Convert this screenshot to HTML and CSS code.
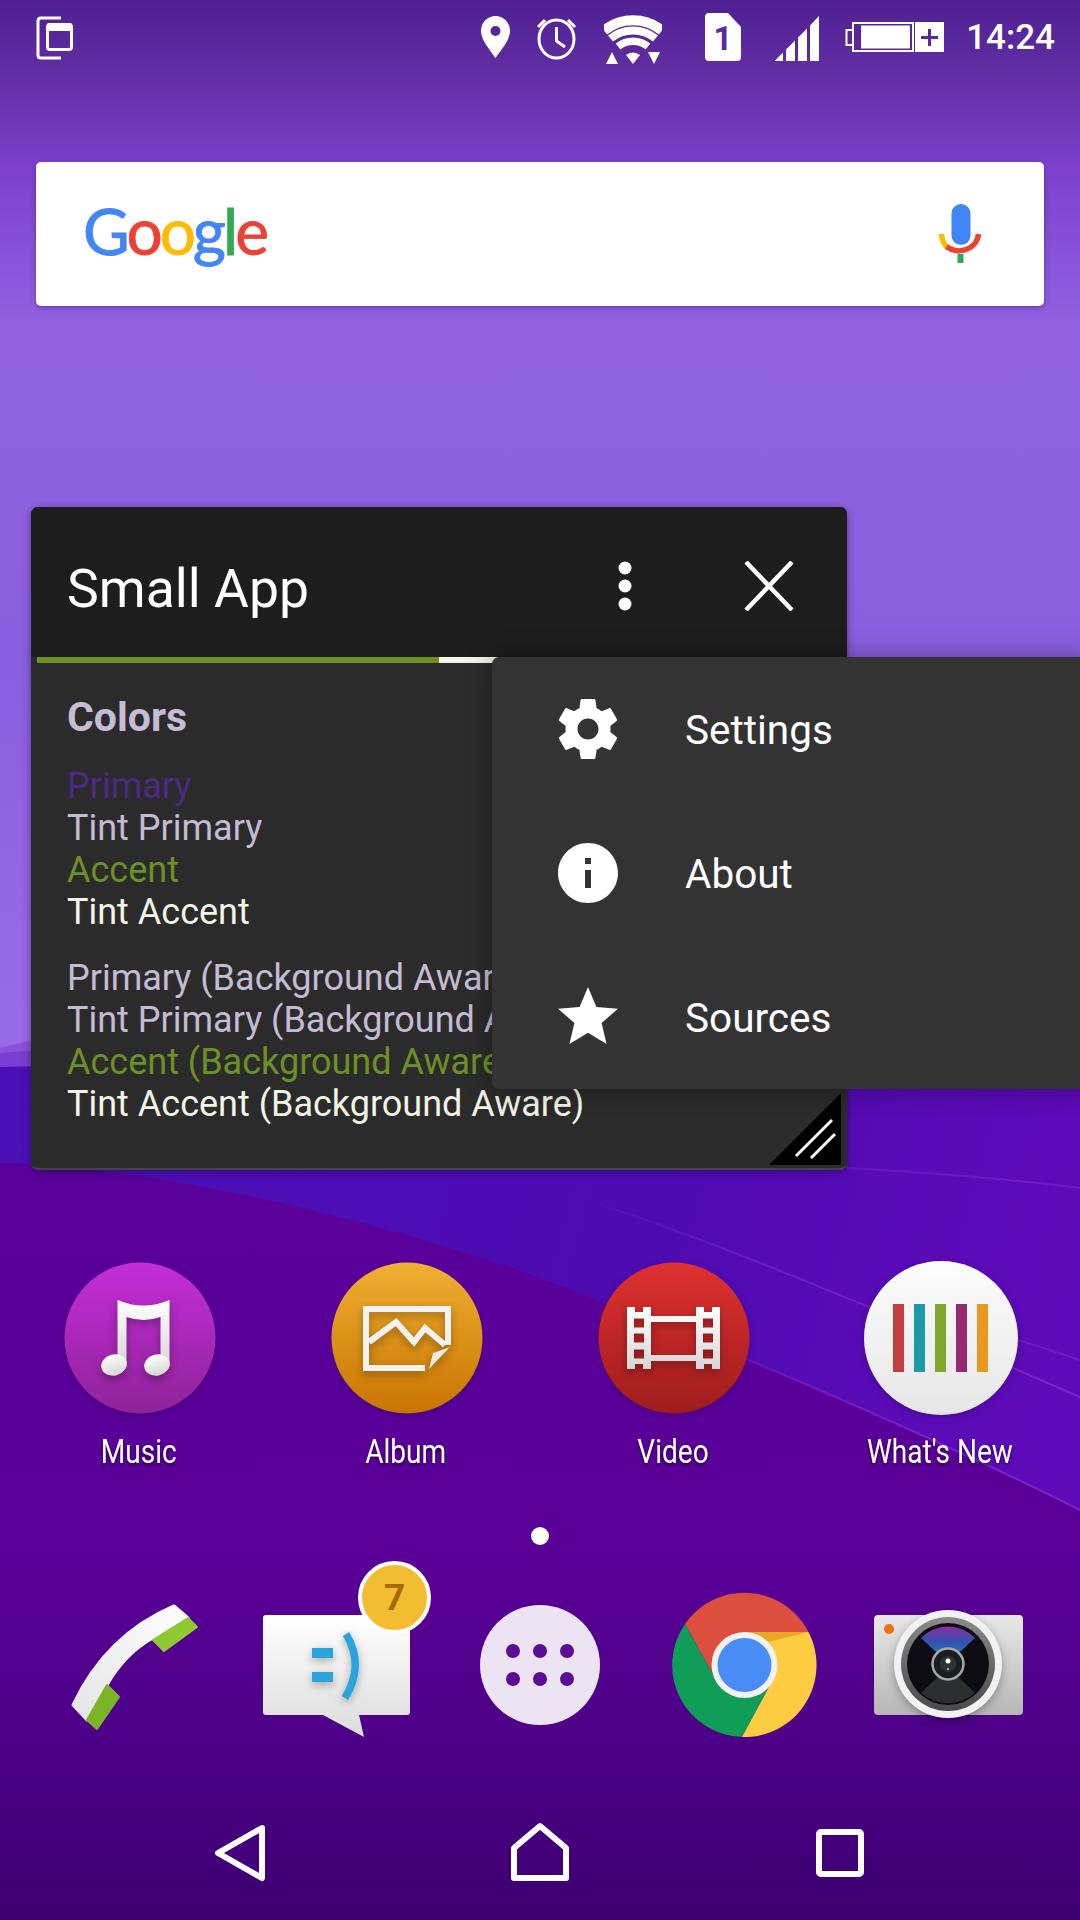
FILE: index.html
```html
<!DOCTYPE html>
<html lang="en">
<head>
<meta charset="utf-8">
<title>Small App</title>
<link rel="stylesheet" href="styles.css">
</head>
<body>
<div class="screen">
  <svg class="wallpaper" viewBox="0 0 1080 1920" aria-hidden="true">
    <defs>
      <linearGradient id="wpTop" x1="0" y1="0" x2="0" y2="1">
        <stop offset="0" stop-color="#4f2092"/>
        <stop offset=".08" stop-color="#6530a8"/>
        <stop offset=".15" stop-color="#7c40cc"/>
        <stop offset=".3" stop-color="#9163e2"/>
        <stop offset=".6" stop-color="#8b5fdf"/>
        <stop offset="1" stop-color="#9a6cec"/>
      </linearGradient>
      <linearGradient id="wpBlue" gradientUnits="userSpaceOnUse" x1="0" y1="1060" x2="1080" y2="1350">
        <stop offset="0" stop-color="#4a10b6"/>
        <stop offset=".6" stop-color="#4e0bb2"/>
        <stop offset="1" stop-color="#5f0ab8"/>
      </linearGradient>
      <linearGradient id="wpLow" gradientUnits="userSpaceOnUse" x1="0" y1="1160" x2="0" y2="1920">
        <stop offset="0" stop-color="#5a009b"/>
        <stop offset=".5" stop-color="#5a0099"/>
        <stop offset=".78" stop-color="#4c0086"/>
        <stop offset="1" stop-color="#3c0070"/>
      </linearGradient>
      <linearGradient id="wpLine" gradientUnits="userSpaceOnUse" x1="560" y1="0" x2="1080" y2="0">
        <stop offset="0" stop-color="#8a2ed0" stop-opacity="0"/>
        <stop offset=".4" stop-color="#8a2ed0" stop-opacity=".45"/>
        <stop offset="1" stop-color="#8a2ed0" stop-opacity=".7"/>
      </linearGradient>
    </defs>
    <rect width="1080" height="1100" fill="url(#wpTop)"/>
    <path d="M0 1048 L40 1038 L1080 1000 V1300 H0Z" fill="#8a52da"/>
    <path d="M0 1053 L40 1050 L1080 1030 V1300 H0Z" fill="#7a3fd0"/>
    <path d="M0 1067 L40 1066 L1080 1050 V1600 H0Z" fill="url(#wpBlue)"/>
    <path d="M0 1163C100 1165 250 1190 424 1240S850 1400 1080 1510V1920H0Z" fill="url(#wpLow)"/>
    <path d="M520 1272C640 1312 900 1420 1080 1510" class="wave-line"/>
    <path d="M600 1205C700 1235 880 1310 1080 1397" class="wave-line"/>
    <path d="M1000 1335C1030 1343 1055 1352 1080 1360" class="wave-line wave-faint"/>
    <path d="M847 1168C920 1172 1000 1178 1080 1188" class="wave-line wave-faint"/>
  </svg>

  <header class="status">
    <svg class="st-tab" viewBox="36 0 38 76" aria-hidden="true">
      <path d="M61 18H41q-3 0-3 3V55q0 3 3 3H61" class="st-line"/>
      <rect x="47.5" y="24.5" width="24" height="25" rx="2.5" class="st-line"/>
      <path d="M47 25q0-2 2-2H70q2 0 2 2v6H47Z" class="st-fill"/>
    </svg>
    <div class="st-right">
      <svg class="st-pin" viewBox="481 0 29 76" aria-hidden="true">
        <path fill-rule="evenodd" class="st-fill" d="M495.5 16c8 0 14.500 6.500 14.500 15 0 9-9 19-14.500 27-5.500-8-14.500-18-14.500-27 0-8.500 6.500-15 14.500-15Zm0 10a5 5 0 1 0 0 10 5 5 0 0 0 0-10Z"/>
      </svg>
      <svg class="st-alarm" viewBox="536 0 43 76" aria-hidden="true">
        <ellipse cx="557.500" cy="39" rx="17.500" ry="19" class="st-line"/>
        <path d="M557.500 27V41L566 47M539 27l7-7M576 27l-7-7" class="st-line"/>
      </svg>
      <svg class="st-wifi" viewBox="605 0 58 76" aria-hidden="true">
        <path d="M605 30.500A46 46 0 0 1 663 30.500" class="st-arc st-a1"/>
        <path d="M611.500 38.500A36 36 0 0 1 656.500 38.500" class="st-arc st-a2"/>
        <path d="M619 46.500A24 24 0 0 1 649 46.500" class="st-arc st-a3"/>
        <path d="M627 55A11 11 0 0 1 641 55L634 64Z" class="st-fill"/>
        <path d="M607 64L613 52L619 64ZM649 52H661L655 64Z" class="st-fill"/>
      </svg>
      <svg class="st-sim" viewBox="706 0 36 76" aria-hidden="true">
        <path d="M710 13H729L742 27V57q0 4-4 4H710q-4 0-4-4V17q0-4 4-4Z" class="st-fill"/>
        <text x="724" y="50" class="st-simnum">1</text>
      </svg>
      <svg class="st-signal" viewBox="775 0 45 76" aria-hidden="true">
        <path d="M775.500 61L784 52.500V61ZM787 49.500L796 40.500V61H787ZM799 37.500L808 28.500V61H799ZM811 25.500L820 16V61H811Z" class="st-fill"/>
      </svg>
      <svg class="st-batt" viewBox="846 0 99 76" aria-hidden="true">
        <path d="M853.500 30H847.500V45H853.500M854 23H914V51H854Z" class="st-thin"/>
        <rect x="862" y="25.500" width="49" height="23" class="st-fill"/>
        <path fill-rule="evenodd" class="st-fill" d="M916 22H945V52H916ZM929 29V36H922V39H929V46H932V39H939V36H932V29Z"/>
      </svg>
      <span class="clock">14:24</span>
    </div>
  </header>

  <section class="search">
    <div class="google"><span class="g-blue">G</span><span class="g-red">o</span><span class="g-yellow">o</span><span class="g-blue">g</span><span class="g-green">l</span><span class="g-red">e</span></div>
    <svg class="mic" viewBox="936 200 48 68" aria-hidden="true">
      <rect x="951.500" y="204" width="19" height="41" rx="9.500" fill="#4285f4"/>
      <path d="M941.500 234a19.500 19.500 0 0 0 7 14.500" fill="none" stroke="#fbbc05" stroke-width="5.500"/>
      <path d="M946.500 246.500a19.500 18 0 0 0 32-12.500" fill="none" stroke="#ea4335" stroke-width="5.500"/>
      <rect x="957.500" y="254" width="6" height="9" fill="#34a853"/>
    </svg>
  </section>

  <section class="window">
    <div class="win-title">
      <h1 class="win-name">Small App</h1>
      <svg class="win-dots" viewBox="0 0 14 50" aria-hidden="true">
        <circle cx="7" cy="7" r="6.500"/><circle cx="7" cy="25" r="6.500"/><circle cx="7" cy="43" r="6.500"/>
      </svg>
      <svg class="win-close" viewBox="0 0 50 50" aria-hidden="true">
        <path d="M2 1L48 49M48 1L2 49"/>
      </svg>
    </div>
    <div class="win-progress"><div class="win-progress-on"></div></div>
    <div class="win-body">
      <h2 class="colors-title">Colors</h2>
      <ul class="colors">
        <li class="c-primary">Primary</li>
        <li class="c-tint">Tint Primary</li>
        <li class="c-accent">Accent</li>
        <li class="c-tintaccent">Tint Accent</li>
      </ul>
      <ul class="colors colors-aware">
        <li class="c-tint">Primary (Background Aware)</li>
        <li class="c-tint">Tint Primary (Background Aware)</li>
        <li class="c-accent">Accent (Background Aware)</li>
        <li class="c-tintaccent">Tint Accent (Background Aware)</li>
      </ul>
    </div>
    <svg class="resizer" viewBox="0 0 72 72" aria-hidden="true">
      <path d="M72 0V70q0 2-2 2H0Z" fill="#000"/>
      <path d="M27 63L63 27M42 65L66 41" class="resizer-line"/>
    </svg>
    <nav class="menu">
      <div class="menu-item">
        <svg class="menu-icon" viewBox="0 0 24 24" aria-hidden="true"><path d="M19.430 12.980c.04-.32.07-.64.07-.98s-.03-.66-.07-.98l2.110-1.650c.19-.15.24-.42.12-.64l-2-3.460c-.12-.22-.39-.3-.61-.22l-2.490 1c-.52-.4-1.080-.73-1.690-.98l-.38-2.650C14.460 2.180 14.250 2 14 2h-4c-.25 0-.46.18-.49.42l-.38 2.650c-.61.25-1.170.59-1.690.98l-2.490-1c-.23-.09-.49 0-.61.22l-2 3.460c-.13.22-.07.49.12.64l2.110 1.650c-.04.32-.07.65-.07.98s.03.66.07.98l-2.110 1.650c-.19.15-.24.42-.12.64l2 3.460c.12.22.39.3.61.22l2.490-1c.52.4 1.080.73 1.690.98l.38 2.650c.03.24.24.42.49.42h4c.25 0 .46-.18.49-.42l.38-2.650c.61-.25 1.170-.59 1.690-.98l2.490 1c.23.09.49 0 .61-.22l2-3.460c.12-.22.07-.49-.12-.64l-2.110-1.650zM12 15.500c-1.930 0-3.500-1.570-3.500-3.500s1.570-3.500 3.500-3.500 3.500 1.570 3.500 3.500-1.570 3.500-3.500 3.500z"/></svg>
        <span class="menu-text">Settings</span>
      </div>
      <div class="menu-item">
        <svg class="menu-icon" viewBox="0 0 24 24" aria-hidden="true"><path d="M12 2C6.480 2 2 6.480 2 12s4.480 10 10 10 10-4.480 10-10S17.520 2 12 2zm1 15h-2v-6h2v6zm0-8h-2V7h2v2z"/></svg>
        <span class="menu-text">About</span>
      </div>
      <div class="menu-item">
        <svg class="menu-icon" viewBox="0 0 24 24" aria-hidden="true"><path d="M12 17.270L18.180 21l-1.640-7.030L22 9.240l-7.190-.61L12 2 9.190 8.630 2 9.240l5.460 4.730L5.820 21z"/></svg>
        <span class="menu-text">Sources</span>
      </div>
    </nav>
  </section>

  <section class="home-row">
    <div class="app">
      <svg class="app-icon" viewBox="0 0 154 154" aria-hidden="true">
        <defs><linearGradient id="gMusic" x1="0" y1="0" x2="0" y2="1"><stop offset="0" stop-color="#c42dd8"/><stop offset="1" stop-color="#8e2398"/></linearGradient>
        <linearGradient id="gGlyph" x1="0" y1="0" x2="0" y2="1"><stop offset="0" stop-color="#ffffff"/><stop offset="1" stop-color="#d6d6d6"/></linearGradient></defs>
        <circle cx="77" cy="77" r="75.500" fill="url(#gMusic)"/>
        <g class="glyph-shadow" fill="url(#gGlyph)">
          <path d="M54.500 39Q80.500 50 106.500 39V104H97.500V56Q80.500 62 63.500 56V104H54.500Z"/>
          <ellipse cx="51" cy="104" rx="13" ry="10.500" transform="rotate(-15 51 104)"/>
          <ellipse cx="94" cy="104" rx="13" ry="10.500" transform="rotate(-15 94 104)"/>
        </g>
      </svg>
      <span class="app-label">Music</span>
    </div>
    <div class="app">
      <svg class="app-icon" viewBox="0 0 154 154" aria-hidden="true">
        <defs><linearGradient id="gAlbum" x1="0" y1="0" x2="0" y2="1"><stop offset="0" stop-color="#f0b033"/><stop offset="1" stop-color="#c87400"/></linearGradient></defs>
        <circle cx="77" cy="77" r="75.500" fill="url(#gAlbum)"/>
        <g class="glyph-shadow">
          <path d="M118 84V48H36V107H95" fill="none" stroke="#f2f2f2" stroke-width="6"/>
          <path d="M39 81L66 61L84 81L95 67L115 84" fill="none" stroke="#f2f2f2" stroke-width="6"/>
          <path d="M99 108L120 86L103 92Z" fill="#e8e8e8"/>
        </g>
      </svg>
      <span class="app-label">Album</span>
    </div>
    <div class="app">
      <svg class="app-icon" viewBox="0 0 154 154" aria-hidden="true">
        <defs><linearGradient id="gVideo" x1="0" y1="0" x2="0" y2="1"><stop offset="0" stop-color="#e03030"/><stop offset="1" stop-color="#9e1c1c"/></linearGradient></defs>
        <circle cx="77" cy="77" r="75.500" fill="url(#gVideo)"/>
        <path class="glyph-shadow" fill="url(#gGlyph)" fill-rule="evenodd" d="M30 46H38V51H46V46H54V55H99V46H107V51H115V46H123V108H115V103H107V108H99V100H54V108H46V103H38V108H30ZM54 61V94H99V61ZM37 57.500V66.500H47V57.500ZM37 72.500V81.500H47V72.500ZM37 88.500V97.500H47V88.500ZM106 57.500V66.500H116V57.500ZM106 72.500V81.500H116V72.500ZM106 88.500V97.500H116V88.500Z"/>
      </svg>
      <span class="app-label">Video</span>
    </div>
    <div class="app">
      <svg class="app-icon" viewBox="0 0 154 154" aria-hidden="true">
        <defs><linearGradient id="gNew" x1="0" y1="0" x2="0" y2="1"><stop offset="0" stop-color="#fdfdfd"/><stop offset="1" stop-color="#e6e6e6"/></linearGradient></defs>
        <circle cx="77" cy="77" r="77" fill="url(#gNew)"/>
        <rect x="29" y="43" width="11" height="68" fill="#c43c3e"/>
        <rect x="50" y="43" width="11" height="68" fill="#1d9aa8"/>
        <rect x="71" y="43" width="11" height="68" fill="#7da82c"/>
        <rect x="92" y="43" width="11" height="68" fill="#952a70"/>
        <rect x="113" y="43" width="11" height="68" fill="#ea9820"/>
      </svg>
      <span class="app-label">What's New</span>
    </div>
  </section>

  <div class="page-dots"><span class="page-dot"></span></div>

  <section class="dock">
    <div class="dock-cell">
      <svg class="dock-icon" viewBox="0 0 204 160" aria-hidden="true">
        <defs><linearGradient id="gPhone" x1="1" y1="0" x2="0" y2="1"><stop offset="0" stop-color="#ffffff"/><stop offset="1" stop-color="#e4e4e4"/></linearGradient></defs>
        <path d="M144 21Q76 50 43 120L57 135L77 100Q94 70 121 54L158 33Z" fill="url(#gPhone)" stroke="url(#gPhone)" stroke-width="3" stroke-linejoin="round"/>
        <path d="M158 33L167 42L134 66L123 55Z" fill="#90c832" stroke="#90c832" stroke-width="2" stroke-linejoin="round"/>
        <path d="M77 100L89 112L67 144L57 135Z" fill="#7cb428" stroke="#7cb428" stroke-width="2" stroke-linejoin="round"/>
      </svg>
    </div>
    <div class="dock-cell">
      <svg class="dock-icon" viewBox="0 0 204 160" aria-hidden="true">
        <defs><linearGradient id="gMsg" x1="0" y1="0" x2="0" y2="1"><stop offset="0" stop-color="#ffffff"/><stop offset="1" stop-color="#dcdcdc"/></linearGradient></defs>
        <path d="M32 30H173q3 0 3 3V127q0 3-3 3H125L130 152L89 130H32q-3 0-3-3V33q0-3 3-3Z" fill="url(#gMsg)"/>
        <g class="glyph-shadow-soft">
          <rect x="78" y="63" width="21" height="10" fill="#2aa5dc"/>
          <rect x="78" y="87" width="21" height="10" fill="#2aa5dc"/>
          <path d="M112 49Q131 80 111 113" fill="none" stroke="#2aa5dc" stroke-width="7.500"/>
        </g>
      </svg>
      <span class="badge">7</span>
    </div>
    <div class="dock-cell">
      <svg class="dock-icon" viewBox="0 0 204 160" aria-hidden="true">
        <circle cx="102" cy="80" r="60" fill="#ece4f2"/>
        <g fill="#5a0c98">
          <circle cx="75" cy="66" r="7"/><circle cx="102" cy="66" r="7"/><circle cx="129" cy="66" r="7"/>
          <circle cx="75" cy="94" r="7"/><circle cx="102" cy="94" r="7"/><circle cx="129" cy="94" r="7"/>
        </g>
      </svg>
    </div>
    <div class="dock-cell">
      <svg class="dock-icon" viewBox="0 0 204 160" aria-hidden="true">
        <path d="M43 39A72 72 0 0 1 166.500 47H102.500L70 88Z" fill="#dc4e3e"/>
        <path d="M43 39A72 72 0 0 0 100 152L127 102L70 88Z" fill="#0f9d58"/>
        <path d="M166.500 47A72 72 0 0 1 100 152L127 102L102.500 47Z" fill="#fdcc40"/>
        <path d="M102.500 47H166.500L122 58Z" fill="#e8a828"/>
        <circle cx="102.500" cy="80" r="33" fill="#f2f2f2"/>
        <circle cx="102.500" cy="80" r="27" fill="#4a8cf5"/>
      </svg>
    </div>
    <div class="dock-cell">
      <svg class="dock-icon" viewBox="0 0 204 160" aria-hidden="true">
        <defs>
          <linearGradient id="gCam" x1="0" y1="0" x2="0" y2="1"><stop offset="0" stop-color="#e8e8e8"/><stop offset="1" stop-color="#b6b6b6"/></linearGradient>
          <linearGradient id="gRing" x1="0" y1="0" x2="0" y2="1"><stop offset="0" stop-color="#8a8a8a"/><stop offset="1" stop-color="#4a4a4a"/></linearGradient>
          <linearGradient id="gFan" x1="0" y1="0" x2="0" y2="1"><stop offset="0" stop-color="#8a2fa0"/><stop offset=".45" stop-color="#2a55b0"/><stop offset="1" stop-color="#3a8ab0"/></linearGradient>
        </defs>
        <rect x="28" y="30" width="149" height="100" rx="4" fill="url(#gCam)"/>
        <circle cx="43" cy="44" r="5" fill="#f0700f"/>
        <circle class="glyph-shadow-soft" cx="102" cy="79" r="54" fill="#f2f2f2"/>
        <circle cx="102" cy="79" r="47" fill="url(#gRing)"/>
        <circle cx="102" cy="79" r="41" fill="#0c0c12"/>
        <path d="M75 53A37.500 37.500 0 0 1 129 53L102 78Z" fill="url(#gFan)"/>
        <path d="M75 108A41 41 0 0 0 129 108L102 82Z" fill="#2c2e30"/>
        <circle cx="102" cy="79" r="15.500" fill="#1a1e20" stroke="#a8aaa8" stroke-width="2.500"/>
        <circle cx="102" cy="79" r="8" fill="#2c3432"/>
        <circle cx="102" cy="76" r="2.500" fill="#fff"/>
        <circle cx="102" cy="84" r="1" fill="#ccc"/>
      </svg>
    </div>
  </section>

  <nav class="navbar">
    <svg class="nav-icon" viewBox="0 0 100 100" aria-hidden="true"><path d="M72 25L28 50L72 75Z"/></svg>
    <svg class="nav-icon" viewBox="0 0 100 100" aria-hidden="true"><path d="M50 23L76 45V75H24V45Z"/></svg>
    <svg class="nav-icon" viewBox="0 0 100 100" aria-hidden="true"><rect x="29" y="29" width="42" height="42" rx="2"/></svg>
  </nav>
</div>
</body>
</html>
```
FILE: styles.css
```css
* { box-sizing: border-box; }
html, body { margin: 0; padding: 0; }
body { font-family: Roboto, "Liberation Sans", sans-serif; background: #4f2092; }
.screen { position: relative; width: 1080px; height: 1920px; overflow: hidden; display: flex; flex-direction: column; }
.wallpaper { position: absolute; left: 0; top: 0; width: 1080px; height: 1920px; }
.wave-line { fill: none; stroke: url(#wpLine); stroke-width: 2; }
.wave-faint { opacity: .6; }

/* status bar */
.status { position: relative; height: 76px; padding: 0 25px 0 36px; display: flex; justify-content: space-between; }
.status svg { height: 76px; flex: none; }
.st-right { display: flex; align-items: flex-start; }
.st-tab { width: 38px; }
.st-pin { width: 29px; }
.st-alarm { width: 43px; margin-left: 25px; }
.st-wifi { width: 58px; margin-left: 26px; }
.st-sim { width: 36px; margin-left: 43px; }
.st-signal { width: 45px; margin-left: 33px; }
.st-batt { width: 99px; margin-left: 26px; }
.st-line { fill: none; stroke: #fff; stroke-width: 3; }
.st-thin { fill: none; stroke: #fff; stroke-width: 2; }
.st-fill { fill: #fff; }
.st-arc { fill: none; stroke: #fff; }
.st-a1 { stroke-width: 10; }
.st-a2 { stroke-width: 8; }
.st-a3 { stroke-width: 7.5; }
.st-simnum { font: 700 33px Roboto, sans-serif; fill: #5a2a9e; text-anchor: middle; }
.clock { margin-left: 22px; color: #fff; font-size: 35px; font-weight: 500; line-height: 76px; }

/* search */
.search { position: relative; margin: 86px 36px 0; height: 144px; background: #fff; border-radius: 5px; box-shadow: 0 2px 5px rgba(30, 0, 80, .35); display: flex; align-items: center; justify-content: space-between; padding: 0 60px 0 47px; }
.google { font-family: Lato, Roboto, sans-serif; font-size: 64px; line-height: 64px; letter-spacing: -3px; margin-top: -6px; -webkit-text-stroke: .8px currentColor; }
.g-blue { color: #4285f4; }
.g-red { color: #ea4335; }
.g-yellow { color: #fbbc05; }
.g-green { color: #34a853; }
.mic { width: 48px; height: 68px; }

/* small app window */
.window { position: relative; margin: 201px 0 0 31px; width: 816px; height: 663px; background: #2b2b2b; border-radius: 7px; border-bottom: 2px solid #444; box-shadow: 0 2px 8px rgba(20, 0, 50, .45); }
.win-title { height: 150px; background: #1d1d1d; border-radius: 7px 7px 0 0; display: flex; align-items: center; padding: 0 53px 0 36px; }
.win-name { margin: 14px 0 0; flex: 1; color: #fff; font-size: 53.5px; font-weight: 400; line-height: 64px; }
.win-dots { width: 14px; height: 50px; margin: 7px 112px 0 0; fill: #fff; }
.win-close { width: 50px; height: 50px; margin-top: 7px; fill: none; stroke: #fff; stroke-width: 4.500; }
.win-progress { height: 6px; margin: 0 6px; background: #f2f4e6; }
.win-progress-on { width: 402px; height: 6px; background: #6b9124; }
.win-body { padding: 33px 0 0 36px; font-size: 36px; line-height: 42px; }
.colors-title { margin: 0 0 27px; font-size: 41px; line-height: 42px; font-weight: 700; color: #c5bcd6; }
.colors { list-style: none; margin: 0; padding: 0; }
.colors-aware { margin-top: 24px; }
.c-primary { color: #4b2a86; }
.c-tint { color: #c4bbd4; }
.c-accent { color: #6b9124; }
.c-tintaccent { color: #f2f4e6; }
.resizer { position: absolute; right: 6px; bottom: 3px; width: 72px; height: 72px; }
.resizer-line { fill: none; stroke: #fff; stroke-width: 3; }
.menu { position: absolute; left: 461px; top: 150px; width: 600px; height: 432px; background: #333; border-radius: 7px; box-shadow: 0 0 26px rgba(0, 0, 0, .35); color: #fff; font-size: 40.5px; }
.menu-item { height: 144px; display: flex; align-items: center; padding-left: 60px; gap: 61px; }
.menu-text { margin-top: 2px; }
.menu-icon { width: 72px; height: 72px; fill: #fff; flex: none; }

/* home icons */
.home-row { position: relative; margin: 91px 0 0 6px; display: grid; grid-template-columns: repeat(4, 267px); }
.app { display: flex; flex-direction: column; align-items: center; }
.app-icon { width: 154px; height: 154px; filter: drop-shadow(0 2px 3px rgba(20, 0, 60, .3)); }
.app-label { margin: 17px 0 0 -2px; color: #fff; font-size: 33px; line-height: 40px; transform: scaleX(.85); white-space: nowrap; text-shadow: 0 2px 4px rgba(0, 0, 0, .55); }
.glyph-shadow { filter: drop-shadow(0 4px 4px rgba(0, 0, 0, .3)); }
.glyph-shadow-soft { filter: drop-shadow(0 3px 4px rgba(0, 0, 0, .3)); }
.page-dots { position: relative; margin-top: 55px; height: 18px; display: flex; justify-content: center; }
.page-dot { width: 18px; height: 18px; border-radius: 50%; background: #fff; }

/* dock */
.dock { position: relative; margin: 40px 0 0 30px; display: grid; grid-template-columns: repeat(5, 204px); }
.dock-cell { position: relative; height: 160px; }
.dock-icon { display: block; width: 204px; height: 160px; }
.badge { position: absolute; left: 124px; top: -24px; width: 73px; height: 73px; border-radius: 50%; background: #f2bd30; border: 4px solid #fff; color: #a86a00; font-size: 37px; font-weight: 700; line-height: 65px; text-align: center; }

/* navigation */
.navbar { position: relative; margin: 58px 0 0 90px; display: grid; grid-template-columns: repeat(3, 300px); justify-items: center; }
.nav-icon { width: 100px; height: 100px; fill: none; stroke: #fff; stroke-width: 6; stroke-linejoin: round; }
```
